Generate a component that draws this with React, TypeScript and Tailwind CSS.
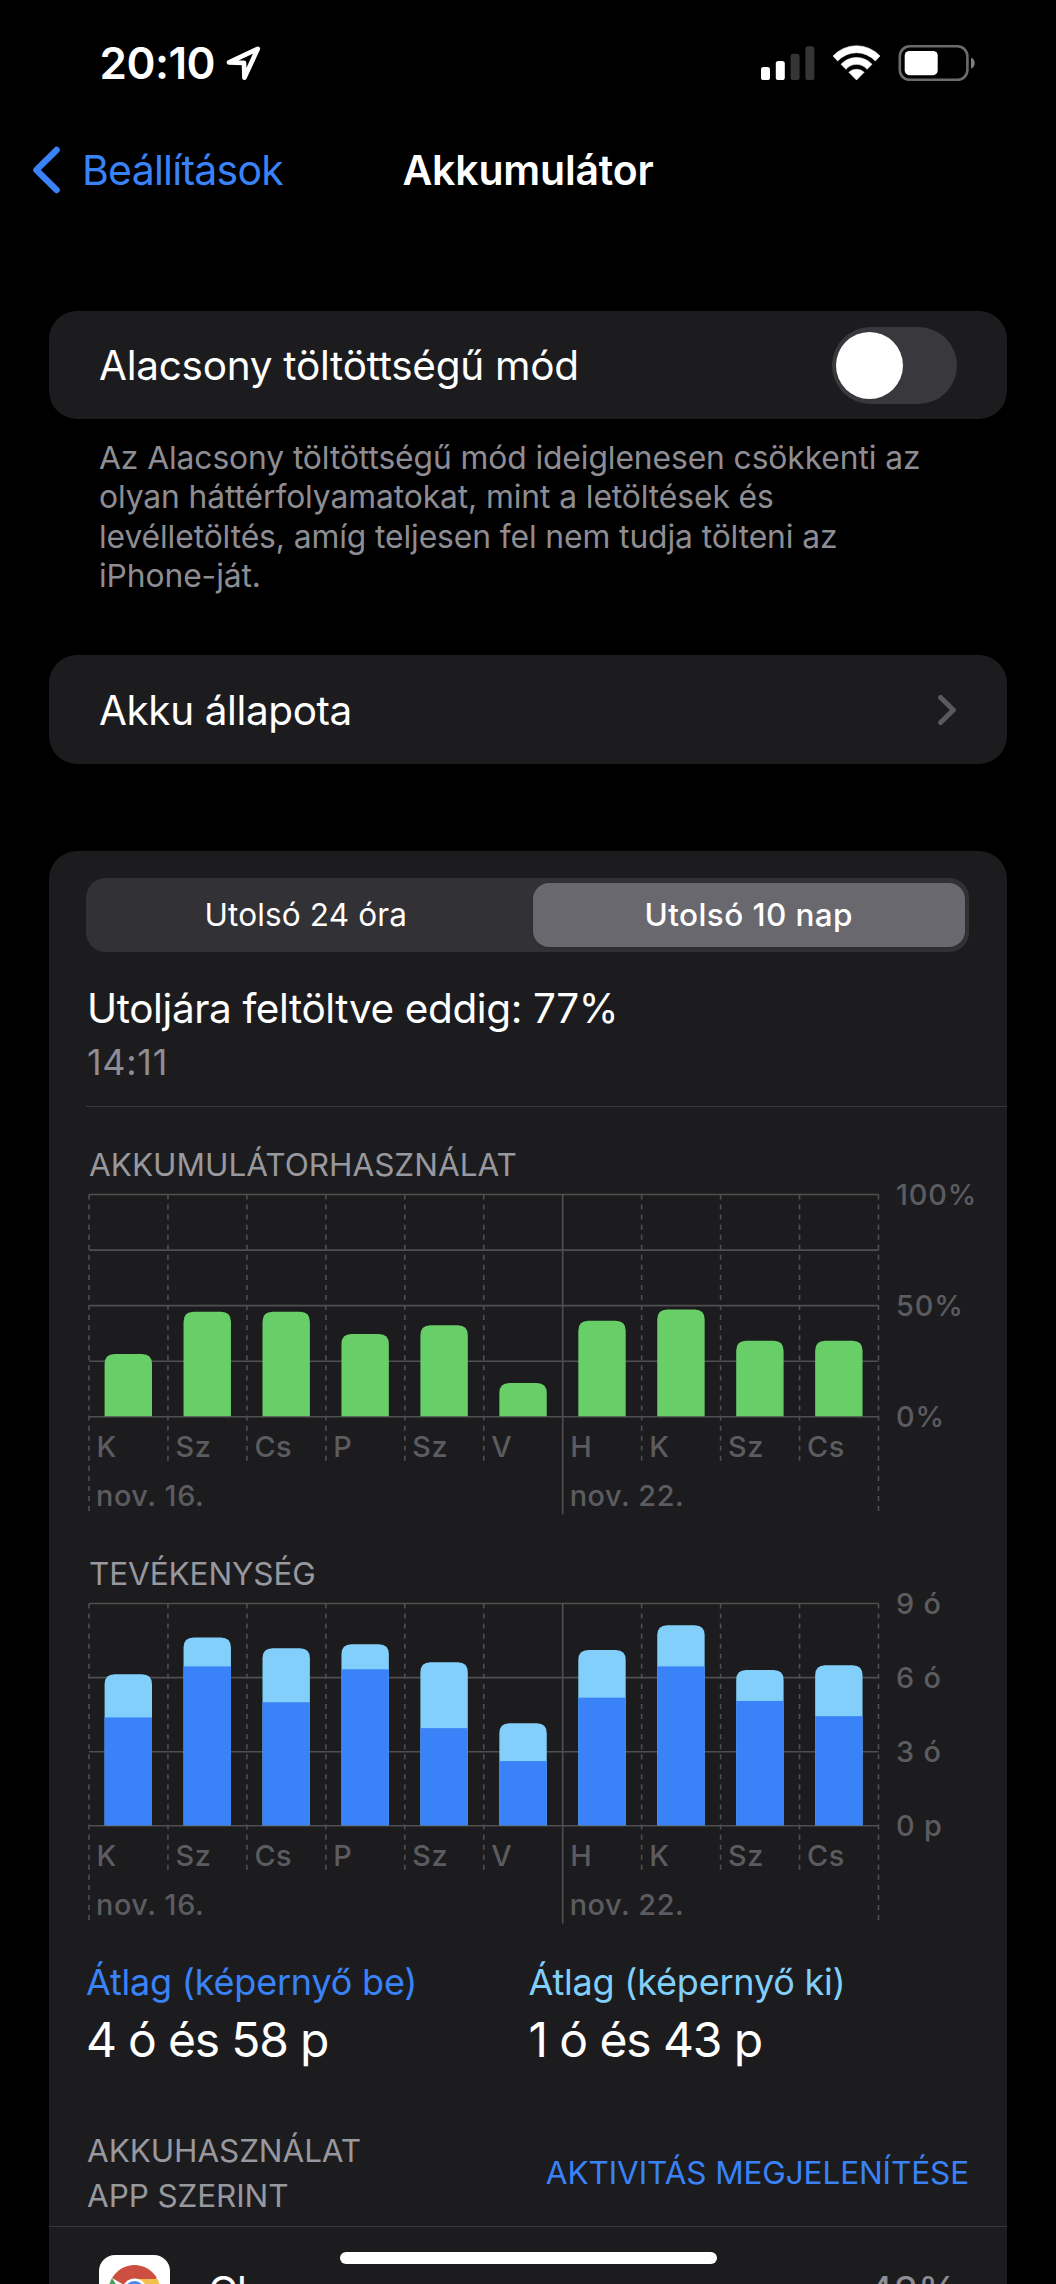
const days = ["K", "Sz", "Cs", "P", "Sz", "V", "H", "K", "Sz", "Cs"];

const batteryUsage = [28, 47, 47, 37, 41, 15, 43, 48, 34, 34];

// minutes per day, screen on / screen on + off
const activity = [
  { on: 262, total: 367 },
  { on: 386, total: 456 },
  { on: 299, total: 430 },
  { on: 379, total: 440 },
  { on: 236, total: 396 },
  { on: 156, total: 248 },
  { on: 310, total: 426 },
  { on: 386, total: 486 },
  { on: 302, total: 377 },
  { on: 265, total: 389 },
];

const STEP = 78.95;
const PLOT_HEIGHT = 222.3;
const BAR_WIDTH = 47.4;
const BAR_OFFSET = 15.6;

type Bar = {
  height: number;
  color: string;
};

type ChartProps = {
  rows: number;
  bars: Bar[][];
  labels: { text: string; value: number }[];
};

const barPath = (x: number, height: number) => {
  const top = PLOT_HEIGHT - height;
  const right = x + BAR_WIDTH;
  return `M${x} ${PLOT_HEIGHT}V${top + 10}Q${x} ${top} ${x + 10} ${top}H${right - 10}Q${right} ${top} ${right} ${top + 10}V${PLOT_HEIGHT}Z`;
};

const Chart = ({ rows, bars, labels }: ChartProps) => {
  const width = STEP * days.length;

  return (
    <svg width="900" height="321" viewBox="0 0 900 321" className="ml-[3px] mt-[9px] block overflow-visible">
      <g stroke="#4f4f52" strokeWidth="1.6">
        {Array.from({ length: rows + 1 }, (_, i) => (
          <line key={i} x1="0" x2={width} y1={0.5 + (PLOT_HEIGHT / rows) * i} y2={0.5 + (PLOT_HEIGHT / rows) * i} />
        ))}
        {Array.from({ length: days.length + 1 }, (_, i) => {
          const isEdge = i === 0 || i === days.length;
          const isMonday = i === 6;
          return (
            <line
              key={i}
              x1={STEP * i}
              x2={STEP * i}
              y1="0.5"
              y2={isMonday ? 320.5 : isEdge ? 317 : 267}
              strokeDasharray={isMonday ? undefined : "5 5.05"}
            />
          );
        })}
      </g>
      {bars.map((parts, i) => {
        const x = STEP * i + BAR_OFFSET;
        const [base, top] = parts;
        return (
          <g key={i}>
            <path d={barPath(x, (top ?? base).height)} fill={(top ?? base).color} />
            {top && <rect x={x} y={PLOT_HEIGHT - base.height} width={BAR_WIDTH} height={base.height} fill={base.color} />}
          </g>
        );
      })}
      <g fill="#5c5c60" fontSize="28.8" fontWeight="500" letterSpacing="0.6">
        {days.map((day, i) => (
          <text key={i} x={STEP * i + 7.5} y="262.8">{day}</text>
        ))}
        <text x="7" y="312">nov. 16.</text>
        <text x={STEP * 6 + 7} y="312">nov. 22.</text>
        {labels.map((label) => (
          <text key={label.text} x="807" y={PLOT_HEIGHT * (1 - label.value) + 10.7} letterSpacing="0.9">{label.text}</text>
        ))}
      </g>
    </svg>
  );
};

const StatusBar = () => (
  <div className="flex h-[126px] items-center pl-[99.5px] pr-[80px]">
    <span className="text-[44px] font-semibold leading-none tracking-[-0.5px]">20:10</span>
    <svg width="35" height="35" viewBox="0 0 35 35" className="ml-[11px]" fill="none" stroke="white" strokeWidth="4.6" strokeLinejoin="round">
      <path d="M31.8 2.8L3 16.4L18 16.9L18.4 31.8Z" />
    </svg>
    <div className="ml-auto flex items-center">
      <svg width="89" height="36" viewBox="0 0 89 36" fill="white">
        <rect x="0" y="22" width="9" height="13" rx="2.6" />
        <rect x="14.8" y="16" width="9" height="19" rx="2.6" />
        <rect x="29.6" y="8.8" width="9" height="26.2" rx="2.6" fill="#353535" />
        <rect x="44.4" y="1.2" width="9" height="33.8" rx="2.6" fill="#353535" />
      </svg>
      <svg width="47" height="36" viewBox="0 0 47 36" className="-ml-[17px]" fill="white">
        <path d="M0 11A32 32 0 0 1 47 11L42.3 16A25.5 25.5 0 0 0 4.7 16Z" stroke="white" strokeWidth="0.6" strokeLinejoin="round" />
        <path d="M8 19.3A21 21 0 0 1 39 19.3L34 24.3A13.5 13.5 0 0 0 13 24.3Z" stroke="white" strokeWidth="0.6" strokeLinejoin="round" />
        <path d="M15.8 27.2A11.5 11.5 0 0 1 31.2 27.2L23.5 35Z" stroke="white" strokeWidth="0.6" strokeLinejoin="round" />
      </svg>
      <svg width="78" height="36" viewBox="0 0 78 36" className="ml-[18px]">
        <rect x="1.8" y="1.3" width="67.6" height="33.6" rx="10" fill="none" stroke="#6b6b6b" strokeWidth="2.6" />
        <rect x="6.7" y="6" width="33" height="24.2" rx="4.6" fill="white" />
        <path d="M73 12.6C78 14.4 78 22 73 23.8Z" fill="#7b7b7b" />
      </svg>
    </div>
  </div>
);

const NavBar = () => (
  <div className="grid h-[88px] grid-cols-[1fr_auto_1fr] items-center">
    <div className="flex items-center pl-[32px] text-[#3a82f7]">
      <svg width="30" height="48" viewBox="0 0 30 48" fill="none" stroke="currentColor" strokeWidth="6.4" strokeLinecap="round" strokeLinejoin="round">
        <path d="M24.6 4L4.4 24L24.6 44" />
      </svg>
      <span className="ml-[20px] text-[41px] leading-none tracking-[-0.75px]">Beállítások</span>
    </div>
    <h1 className="text-[41px] font-semibold leading-none tracking-[-0.2px]">Akkumulátor</h1>
  </div>
);

const SegmentedControl = () => (
  <div className="mr-[38px] grid h-[74px] grid-cols-2 rounded-[20px] bg-[#323136] text-[31.5px] leading-none">
    <div className="flex items-center justify-center pr-[2px] tracking-[0.15px]">Utolsó 24 óra</div>
    <div className="my-[5px] ml-[5px] mr-[4px] flex items-center justify-center rounded-[16px] bg-[#69686e] font-medium tracking-[0.4px] shadow">
      Utolsó 10 nap
    </div>
  </div>
);

const ChromeIcon = () => (
  <svg width="71" height="71" viewBox="0 0 71 71">
    <rect width="71" height="71" rx="16" fill="white" />
    <path d="M35.5 36L13 23A26 26 0 0 1 58 23Z" fill="#cc4f41" />
    <path d="M35.5 24H58.5A26 26 0 0 1 35.5 62L46 42Z" fill="#f3c04c" />
    <path d="M35.5 62A26 26 0 0 1 13 23L25 42L46 42Z" fill="#4a9f63" />
    <circle cx="35.5" cy="36" r="12.4" fill="white" />
    <circle cx="35.5" cy="36" r="10" fill="#4b86ee" />
  </svg>
);

const App = () => {
  return (
    <div className="relative h-[2284px] w-[1056px] overflow-hidden bg-black font-['Inter','Liberation_Sans',sans-serif] text-white">
      <StatusBar />
      <NavBar />

      <main className="mx-[49px] mt-[97px]">
        <section className="flex h-[108px] items-center justify-between rounded-[28px] bg-[#1c1c1e] pl-[50px] pr-[50px]">
          <span className="pt-[2px] text-[40.5px] tracking-[-0.27px]">Alacsony töltöttségű mód</span>
          <div className="h-[77px] w-[125px] rounded-full bg-[#39393d] p-[5px] pl-[4px]">
            <div className="h-[67px] w-[67px] rounded-full bg-white" />
          </div>
        </section>
        <p className="ml-[50px] mt-[19px] text-[31.8px] leading-[39.3px] tracking-[-0.1px] text-[#8d8d93]">
          Az Alacsony töltöttségű mód ideiglenesen csökkenti az
          <br />
          olyan háttérfolyamatokat, mint a letöltések és
          <br />
          levélletöltés, amíg teljesen fel nem tudja tölteni az
          <br />
          iPhone-ját.
        </p>

        <section className="mt-[60px] flex h-[109px] items-center justify-between rounded-[28px] bg-[#1c1c1e] pl-[50px] pr-[50px]">
          <span className="pt-[4px] text-[40.5px] tracking-[-0.4px]">Akku állapota</span>
          <svg width="20" height="32" viewBox="0 0 20 32" fill="none" stroke="#5a5a5e" strokeWidth="5" strokeLinecap="round" strokeLinejoin="round">
            <path d="M3.6 3.5L16.4 16L3.6 28.5" />
          </svg>
        </section>

        <section className="mt-[87px] rounded-t-[28px] bg-[#1c1c1e] pt-[27px]">
          <div className="pl-[37px]">
            <SegmentedControl />
            <div className="ml-px mt-[32px] text-[40.5px] leading-[50px] tracking-[-0.4px]">Utoljára feltöltve eddig: 77%</div>
            <div className="ml-px mt-[5px] text-[36px] leading-[46px] tracking-[0.7px] text-[#8d8d93]">14:11</div>
            <div className="mt-[21px] h-px bg-[#38383b]" />

            <h2 className="ml-[3px] mt-[38px] text-[31.5px] leading-[40px] text-[#98989f]">AKKUMULÁTORHASZNÁLAT</h2>
            <Chart
              rows={4}
              bars={batteryUsage.map((value) => [{ height: (value / 100) * PLOT_HEIGHT, color: "#68ce67" }])}
              labels={[
                { text: "100%", value: 1 },
                { text: "50%", value: 0.5 },
                { text: "0%", value: 0 },
              ]}
            />

            <h2 className="ml-[3px] mt-[39px] text-[31.5px] leading-[40px] tracking-[-0.1px] text-[#98989f]">TEVÉKENYSÉG</h2>
            <Chart
              rows={3}
              bars={activity.map(({ on, total }) => [
                { height: (on / 540) * PLOT_HEIGHT, color: "#3a82f7" },
                { height: (total / 540) * PLOT_HEIGHT, color: "#83cffb" },
              ])}
              labels={[
                { text: "9 ó", value: 1 },
                { text: "6 ó", value: 2 / 3 },
                { text: "3 ó", value: 1 / 3 },
                { text: "0 p", value: 0 },
              ]}
            />

            <div className="mr-[36px] mt-[34px] grid grid-cols-2">
              <div>
                <div className="text-[36px] leading-[48px] tracking-[-0.2px] text-[#3a82f7]">Átlag (képernyő be)</div>
                <div className="mt-[6px] text-[48px] leading-[56px] tracking-[-1.2px]">4 ó és 58 p</div>
              </div>
              <div>
                <div className="text-[36px] leading-[48px] tracking-[-0.2px] text-[#83cffb]">Átlag (képernyő ki)</div>
                <div className="mt-[6px] text-[48px] leading-[56px] tracking-[-1.1px]">1 ó és 43 p</div>
              </div>
            </div>

            <div className="ml-px mr-[38px] mt-[61px] flex items-center justify-between text-[31.5px] leading-[44.5px] tracking-[-0.1px]">
              <h2 className="text-[#98989f]">
                AKKUHASZNÁLAT
                <br />
                APP SZERINT
              </h2>
              <button className="text-[#3a82f7]">AKTIVITÁS MEGJELENÍTÉSE</button>
            </div>
          </div>

          <div className="mt-[8px] h-px bg-[#38383b]" />
          <div className="flex items-center pl-[50px] pr-[50px] pt-[28px]">
            <ChromeIcon />
            <span className="ml-[38px] pt-[4px] text-[40.5px] leading-none tracking-[-0.5px]">Chrome</span>
            <span className="ml-auto pt-[4px] text-[40.5px] leading-none tracking-[-0.5px] text-[#8d8d93]">48%</span>
          </div>
        </section>
      </main>

      {/* home indicator floats above the list */}
      <div className="absolute bottom-[20px] left-[340px] h-[12px] w-[377px] rounded-full bg-white" />
    </div>
  );
};

export default App;
